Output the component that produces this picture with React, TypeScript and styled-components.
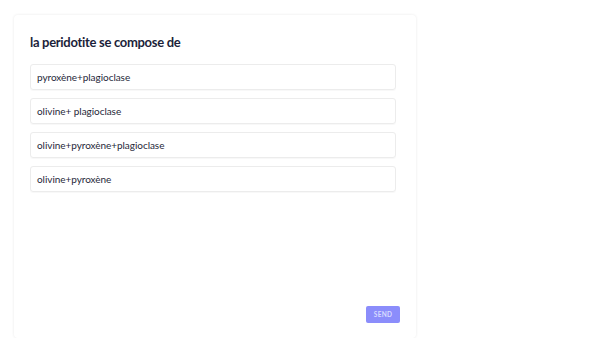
import styled, { createGlobalStyle } from 'styled-components';

const GlobalStyle = createGlobalStyle`
  html, body {
    margin: 0;
    padding: 0;
    background: #ffffff;
    font-family: Lato, "Noto Sans", sans-serif;
    font-variant-ligatures: none;
  }
`;

const Page = styled.div`
  padding: 15px 0 0 14px;
`;

const Card = styled.section`
  box-sizing: border-box;
  width: 402px;
  height: 323px;
  padding: 18px 16px 15px 16px;
  background: #ffffff;
  border-radius: 4px;
  box-shadow: 0 0 3px rgba(0, 0, 0, 0.09);
  display: flex;
  flex-direction: column;
`;

const Title = styled.h2`
  margin: 0 0 13px 0;
  font-size: 13px;
  line-height: 18px;
  font-weight: 700;
  letter-spacing: -0.3px;
  color: #1c1f3a;
`;

const Options = styled.div`
  display: flex;
  flex-direction: column;
  gap: 8px;
  margin-right: 4px;
`;

const Option = styled.div`
  box-sizing: border-box;
  height: 26px;
  display: flex;
  align-items: center;
  padding: 0 6px;
  border: 1px solid #ececec;
  border-radius: 3px;
  box-shadow: 0 1px 1px rgba(0, 0, 0, 0.03);
  font-size: 10px;
  letter-spacing: -0.05px;
  color: #26283a;
  cursor: pointer;
`;

const Footer = styled.div`
  margin-top: auto;
  display: flex;
  justify-content: flex-end;
`;

const SendButton = styled.button`
  width: 34px;
  height: 17px;
  padding: 0;
  border: none;
  border-radius: 2px;
  background: #8b8dfb;
  color: #d9dbff;
  font-family: Lato, "Noto Sans", sans-serif;
  font-size: 6.5px;
  font-weight: 700;
  letter-spacing: 0.3px;
`;

const answers = [
  'pyroxène+plagioclase',
  'olivine+ plagioclase',
  'olivine+pyroxène+plagioclase',
  'olivine+pyroxène',
];

export default function App(): JSX.Element {
  return (
    <>
      <GlobalStyle />
      <Page>
        <Card>
          <Title>la peridotite se compose de</Title>
          <Options>
            {answers.map((answer) => (
              <Option key={answer}>{answer}</Option>
            ))}
          </Options>
          <Footer>
            <SendButton>SEND</SendButton>
          </Footer>
        </Card>
      </Page>
    </>
  );
}
